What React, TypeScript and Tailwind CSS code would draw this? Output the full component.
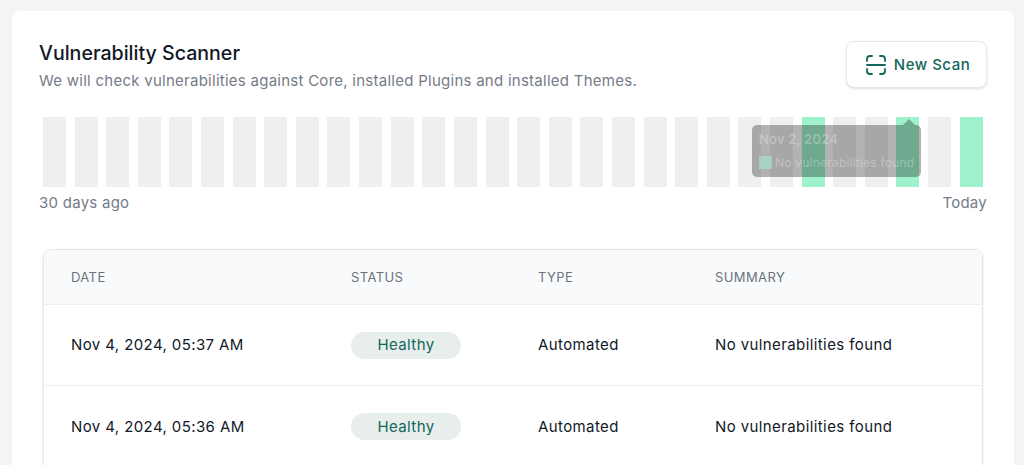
const GREEN_BARS = [24, 27, 29];

const rows = [
  { date: 'Nov 4, 2024, 05:37 AM', status: 'Healthy', type: 'Automated', summary: 'No vulnerabilities found' },
  { date: 'Nov 4, 2024, 05:36 AM', status: 'Healthy', type: 'Automated', summary: 'No vulnerabilities found' },
];

const ScanIcon = () => (
  <svg width="20" height="20" viewBox="0 0 20 20" fill="none" stroke="#14665a" strokeWidth="1.8" strokeLinecap="round" strokeLinejoin="round">
    <path d="M1 6V4a3 3 0 0 1 3-3h2" />
    <path d="M14 1h2a3 3 0 0 1 3 3v2" />
    <path d="M1 10h18" />
    <path d="M1 14v2a3 3 0 0 0 3 3h2" />
    <path d="M14 19h2a3 3 0 0 0 3-3v-2" />
  </svg>
);

const Tooltip = () => (
  <div className="absolute left-[713px] top-[8px] h-[52px] w-[169px] rounded-[5px] bg-black/30 px-[7px] pt-[6px] whitespace-nowrap text-white/30">
    <div className="absolute -top-[6px] left-[151px] size-0 border-x-[6px] border-b-[6px] border-x-transparent border-b-black/30" />
    <div className="h-[17px] text-[13px] font-semibold leading-[17px] tracking-[0.2px]">Nov 2, 2024</div>
    <div className="mt-[6px] flex items-center gap-[3px] text-[12px] leading-[17px] tracking-[0.22px]">
      <span className="size-[13px] shrink-0 bg-[#a6d9c8]/80" />
      <span>No vulnerabilities found</span>
    </div>
  </div>
);

const App = () => (
  <div className="h-[465px] overflow-hidden bg-[#f3f4f6] pl-[12px] pr-[10px] pt-[11px] font-['Inter',sans-serif]">
    <div className="h-[520px] rounded-lg bg-white px-[27px] pt-[30px]">
      <div className="flex items-start justify-between">
        <div>
          <h1 className="text-[19.6px] font-medium leading-[24px] text-[#111827]">Vulnerability Scanner</h1>
          <p className="mt-[6px] text-[15px] leading-[20px] tracking-[0.26px] text-[#757b88]">
            We will check vulnerabilities against Core, installed Plugins and installed Themes.
          </p>
        </div>
        <button className="flex h-[47px] w-[141px] items-center justify-center gap-[8px] rounded-lg border border-[#e5e7eb] bg-white pl-[3px] pt-[1px] text-[15px] font-medium tracking-[0.5px] text-[#14665a] shadow-sm">
          <ScanIcon />
          New Scan
        </button>
      </div>

      <div className="relative mt-[26px] flex justify-between px-[4px]">
        {Array.from({ length: 30 }, (_, i) => (
          <div
            key={i}
            className={GREEN_BARS.includes(i) ? 'h-[70px] w-[23px] bg-[#a0f2cd]' : 'h-[70px] w-[23px] bg-[#efefef]'}
          />
        ))}
        <Tooltip />
      </div>

      <div className="mt-[6px] flex justify-between text-[15px] leading-[20px] tracking-[0.26px] text-[#757b88]">
        <span>30 days ago</span>
        <span>Today</span>
      </div>

      <div className="mx-[4px] mt-[36px] overflow-hidden rounded-t-lg border border-[#e5e7eb] shadow-sm">
        <table className="w-full table-fixed text-left">
          <colgroup>
            <col className="w-[280px]" />
            <col className="w-[187px]" />
            <col className="w-[177px]" />
            <col />
          </colgroup>
          <thead className="bg-[#f9fafb] text-[13px] text-[#6b7280]">
            <tr className="h-[54px]">
              <th className="pl-[27px] pt-[1px] font-normal tracking-[0.4px]">DATE</th>
              <th className="pl-[27px] pt-[1px] font-normal tracking-[0.4px]">STATUS</th>
              <th className="pl-[27px] pt-[1px] font-normal tracking-[0.4px]">TYPE</th>
              <th className="pl-[27px] pt-[1px] font-normal tracking-[0.4px]">SUMMARY</th>
            </tr>
          </thead>
          <tbody className="text-[15px] text-[#111827]">
            {rows.map((row) => (
              <tr key={row.date} className="h-[81px] border-t border-[#eceef1]">
                <td className="pl-[27px] pt-[2px] tracking-[0.4px]">{row.date}</td>
                <td className="pl-[27px] pt-[2px]">
                  <span className="flex h-[27px] w-[110px] items-center justify-center rounded-full bg-[#e7eeec] tracking-[0.4px] text-[#14665a]">
                    {row.status}
                  </span>
                </td>
                <td className="pl-[27px] pt-[2px] tracking-[0.4px]">{row.type}</td>
                <td className="pl-[27px] pt-[2px] tracking-[0.4px]">{row.summary}</td>
              </tr>
            ))}
          </tbody>
        </table>
      </div>
    </div>
  </div>
);

export default App;
